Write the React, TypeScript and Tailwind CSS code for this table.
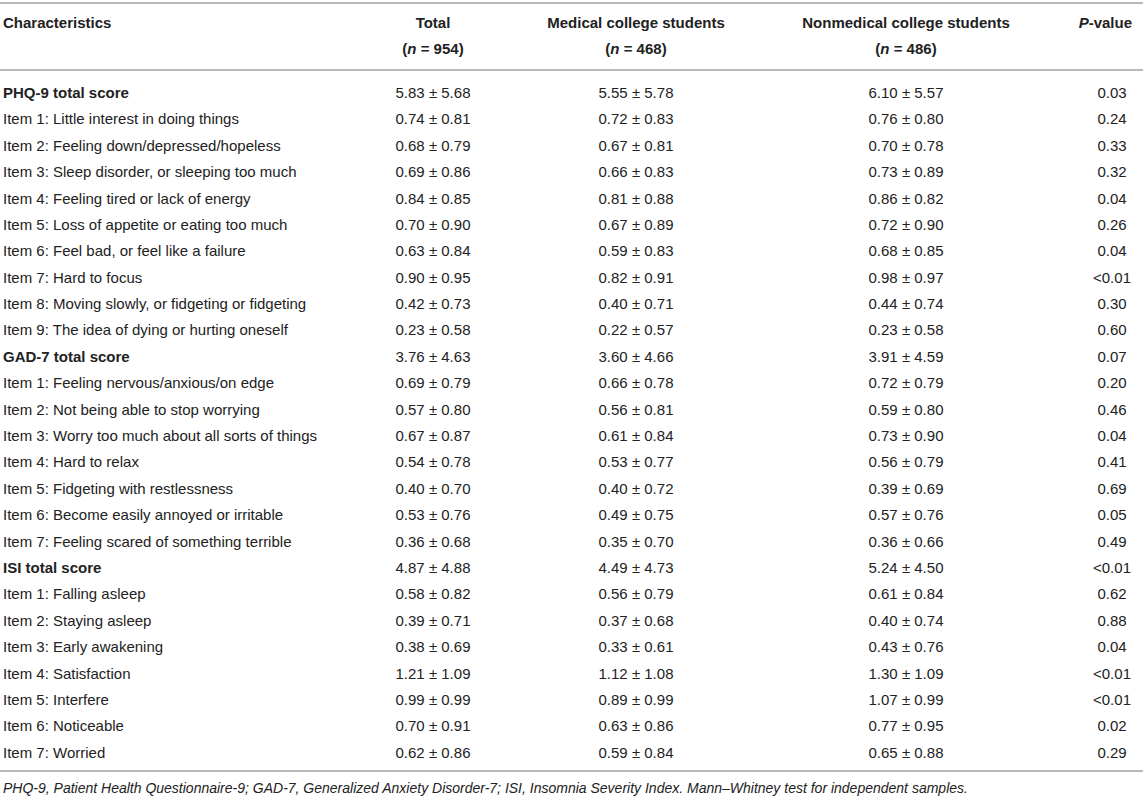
import React from "react";

type Row = {
  label: string;
  total: string;
  medical: string;
  nonmedical: string;
  p: string;
  bold?: boolean;
};

const rows: Row[] = [
  { label: "PHQ-9 total score", total: "5.83 ± 5.68", medical: "5.55 ± 5.78", nonmedical: "6.10 ± 5.57", p: "0.03", bold: true },
  { label: "Item 1: Little interest in doing things", total: "0.74 ± 0.81", medical: "0.72 ± 0.83", nonmedical: "0.76 ± 0.80", p: "0.24" },
  { label: "Item 2: Feeling down/depressed/hopeless", total: "0.68 ± 0.79", medical: "0.67 ± 0.81", nonmedical: "0.70 ± 0.78", p: "0.33" },
  { label: "Item 3: Sleep disorder, or sleeping too much", total: "0.69 ± 0.86", medical: "0.66 ± 0.83", nonmedical: "0.73 ± 0.89", p: "0.32" },
  { label: "Item 4: Feeling tired or lack of energy", total: "0.84 ± 0.85", medical: "0.81 ± 0.88", nonmedical: "0.86 ± 0.82", p: "0.04" },
  { label: "Item 5: Loss of appetite or eating too much", total: "0.70 ± 0.90", medical: "0.67 ± 0.89", nonmedical: "0.72 ± 0.90", p: "0.26" },
  { label: "Item 6: Feel bad, or feel like a failure", total: "0.63 ± 0.84", medical: "0.59 ± 0.83", nonmedical: "0.68 ± 0.85", p: "0.04" },
  { label: "Item 7: Hard to focus", total: "0.90 ± 0.95", medical: "0.82 ± 0.91", nonmedical: "0.98 ± 0.97", p: "<0.01" },
  { label: "Item 8: Moving slowly, or fidgeting or fidgeting", total: "0.42 ± 0.73", medical: "0.40 ± 0.71", nonmedical: "0.44 ± 0.74", p: "0.30" },
  { label: "Item 9: The idea of dying or hurting oneself", total: "0.23 ± 0.58", medical: "0.22 ± 0.57", nonmedical: "0.23 ± 0.58", p: "0.60" },
  { label: "GAD-7 total score", total: "3.76 ± 4.63", medical: "3.60 ± 4.66", nonmedical: "3.91 ± 4.59", p: "0.07", bold: true },
  { label: "Item 1: Feeling nervous/anxious/on edge", total: "0.69 ± 0.79", medical: "0.66 ± 0.78", nonmedical: "0.72 ± 0.79", p: "0.20" },
  { label: "Item 2: Not being able to stop worrying", total: "0.57 ± 0.80", medical: "0.56 ± 0.81", nonmedical: "0.59 ± 0.80", p: "0.46" },
  { label: "Item 3: Worry too much about all sorts of things", total: "0.67 ± 0.87", medical: "0.61 ± 0.84", nonmedical: "0.73 ± 0.90", p: "0.04" },
  { label: "Item 4: Hard to relax", total: "0.54 ± 0.78", medical: "0.53 ± 0.77", nonmedical: "0.56 ± 0.79", p: "0.41" },
  { label: "Item 5: Fidgeting with restlessness", total: "0.40 ± 0.70", medical: "0.40 ± 0.72", nonmedical: "0.39 ± 0.69", p: "0.69" },
  { label: "Item 6: Become easily annoyed or irritable", total: "0.53 ± 0.76", medical: "0.49 ± 0.75", nonmedical: "0.57 ± 0.76", p: "0.05" },
  { label: "Item 7: Feeling scared of something terrible", total: "0.36 ± 0.68", medical: "0.35 ± 0.70", nonmedical: "0.36 ± 0.66", p: "0.49" },
  { label: "ISI total score", total: "4.87 ± 4.88", medical: "4.49 ± 4.73", nonmedical: "5.24 ± 4.50", p: "<0.01", bold: true },
  { label: "Item 1: Falling asleep", total: "0.58 ± 0.82", medical: "0.56 ± 0.79", nonmedical: "0.61 ± 0.84", p: "0.62" },
  { label: "Item 2: Staying asleep", total: "0.39 ± 0.71", medical: "0.37 ± 0.68", nonmedical: "0.40 ± 0.74", p: "0.88" },
  { label: "Item 3: Early awakening", total: "0.38 ± 0.69", medical: "0.33 ± 0.61", nonmedical: "0.43 ± 0.76", p: "0.04" },
  { label: "Item 4: Satisfaction", total: "1.21 ± 1.09", medical: "1.12 ± 1.08", nonmedical: "1.30 ± 1.09", p: "<0.01" },
  { label: "Item 5: Interfere", total: "0.99 ± 0.99", medical: "0.89 ± 0.99", nonmedical: "1.07 ± 0.99", p: "<0.01" },
  { label: "Item 6: Noticeable", total: "0.70 ± 0.91", medical: "0.63 ± 0.86", nonmedical: "0.77 ± 0.95", p: "0.02" },
  { label: "Item 7: Worried", total: "0.62 ± 0.86", medical: "0.59 ± 0.84", nonmedical: "0.65 ± 0.88", p: "0.29" },
];

// same column template for header and body rows
const cols = "grid grid-cols-[360px_146px_260px_315px_62px]";

export default function App() {
  return (
    <div className="w-[1143px] h-[801px] bg-white pt-[2px] text-[15px] text-[#222] font-['Liberation_Sans',Arial,sans-serif] overflow-hidden">
      <div className="border-t-2 border-[#b8b8b8]">
        <div className={`${cols} pt-[6px] pb-[7px] font-bold leading-[26px]`}>
          <div className="pl-[3px]">Characteristics</div>
          <div className="flex flex-col items-center">
            <span>Total</span>
            <span>
              (<i>n</i> = 954)
            </span>
          </div>
          <div className="flex flex-col items-center">
            <span>Medical college students</span>
            <span>
              (<i>n</i> = 468)
            </span>
          </div>
          <div className="flex flex-col items-center pr-[35px]">
            <span>Nonmedical college students</span>
            <span>
              (<i>n</i> = 486)
            </span>
          </div>
          <div className="text-right pr-[11px] whitespace-nowrap -ml-[10px]">
            <i>P</i>-value
          </div>
        </div>
      </div>

      <div className="border-t-2 border-b-2 border-[#b8b8b8] pt-[9px] pb-[4px]">
        {rows.map((row, i) => (
          <div key={i} className={`${cols} h-[26.4px] items-center`}>
            <div className={`pl-[3px] whitespace-nowrap ${row.bold ? "font-bold" : ""}`}>
              {row.label}
            </div>
            <div className="text-center">{row.total}</div>
            <div className="text-center">{row.medical}</div>
            <div className="text-center pr-[35px]">{row.nonmedical}</div>
            <div className="text-center">{row.p}</div>
          </div>
        ))}
      </div>

      <p className="pl-[3px] pt-[6px] italic text-[14px] leading-[20px]">
        PHQ-9, Patient Health Questionnaire-9; GAD-7, Generalized Anxiety Disorder-7; ISI, Insomnia Severity Index.
        Mann–Whitney test for independent samples.
      </p>
    </div>
  );
}
